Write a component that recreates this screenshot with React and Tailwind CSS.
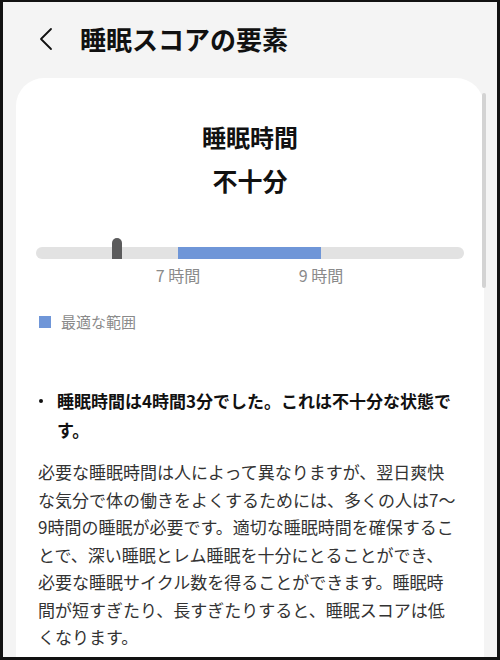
import React from 'react';

const jp = { fontFamily: '"Noto Sans CJK JP", "Noto Sans", sans-serif' };

// 7h and 9h sit at these offsets (px) along the track
const RANGE_START = 142;
const RANGE_WIDTH = 143;
const MARKER_LEFT = 76;

const ChevronLeft = () => (
  <svg width="16" height="24" viewBox="0 0 16 24" fill="none">
    <path d="M13 2 L3 12 L13 22" stroke="#111" strokeWidth="1.8" strokeLinecap="round" strokeLinejoin="round" />
  </svg>
);

const SleepBar = () => (
  <div className="px-[20px]">
    <div className="relative h-[21px] flex items-end">
      <div className="flex w-full h-[12px] rounded-full overflow-hidden bg-[#e2e2e2]">
        <div className="shrink-0" style={{ width: RANGE_START }} />
        <div className="shrink-0 bg-[#6f96d8]" style={{ width: RANGE_WIDTH }} />
      </div>
      {/* current value marker */}
      <div
        className="absolute top-0 w-[10px] h-[21px] rounded-t-full bg-[#5b5b5c]"
        style={{ left: MARKER_LEFT }}
      />
    </div>
    <div className="flex mt-[6px] h-[20px] text-[16px] leading-[20px] text-[#8a8a8a]">
      <div className="shrink-0" style={{ width: RANGE_START }} />
      <div className="w-0 flex justify-center">
        <span className="whitespace-nowrap">7 時間</span>
      </div>
      <div className="shrink-0" style={{ width: RANGE_WIDTH }} />
      <div className="w-0 flex justify-center">
        <span className="whitespace-nowrap">9 時間</span>
      </div>
    </div>
  </div>
);

export default function App() {
  return (
    <div
      className="relative w-[500px] h-[660px] flex flex-col bg-[#f4f4f4] border-t-2 border-x-[3px] border-b-[3px] border-[#121212] overflow-hidden"
      style={jp}
    >
      <header className="h-[76px] shrink-0 flex items-center pb-[2px]">
        <div className="ml-[35px] w-[16px] flex items-center">
          <ChevronLeft />
        </div>
        <h1 className="ml-[26px] text-[26px] font-bold text-[#111] leading-none">睡眠スコアの要素</h1>
      </header>

      <main className="flex-1 ml-[13px] w-[468px] bg-white rounded-t-[28px] pt-[43px]">
        <div className="flex flex-col items-center text-[#111] font-bold">
          <h2 className="text-[24px] leading-[32px]">睡眠時間</h2>
          <p className="mt-[10px] text-[25px] leading-[34px]">不十分</p>
        </div>

        <div className="mt-[41px]">
          <SleepBar />
        </div>

        <div className="mt-[27px] pl-[23px] flex items-center h-[20px] gap-[10px]">
          <span className="w-[12px] h-[12px] bg-[#6f96d8]" />
          <span className="text-[15px] leading-[20px] text-[#8a8a8a]">最適な範囲</span>
        </div>

        <div className="mt-[54px] pl-[22px] pr-[22px] flex">
          <div className="w-[19px] h-[29px] shrink-0 flex items-center">
            <span className="ml-[1px] w-[4px] h-[4px] rounded-full bg-[#111]" />
          </div>
          <p className="text-[17px] leading-[29px] font-bold text-[#111]">
            睡眠時間は4時間3分でした。これは不十分な状態です。
          </p>
        </div>

        <p className="mt-[14px] pl-[22px] pr-[26px] text-[17px] leading-[27.5px] text-[#333]">
          必要な睡眠時間は人によって異なりますが、翌日爽快な気分で体の働きをよくするためには、多くの人は7～9時間の睡眠が必要です。適切な睡眠時間を確保することで、深い睡眠とレム睡眠を十分にとることができ、必要な睡眠サイクル数を得ることができます。睡眠時間が短すぎたり、長すぎたりすると、睡眠スコアは低くなります。
        </p>
      </main>

      {/* scroll indicator */}
      <div className="absolute left-[479px] top-[91px] w-[4px] h-[195px] rounded-full bg-[#d3d3d3]" />
    </div>
  );
}
